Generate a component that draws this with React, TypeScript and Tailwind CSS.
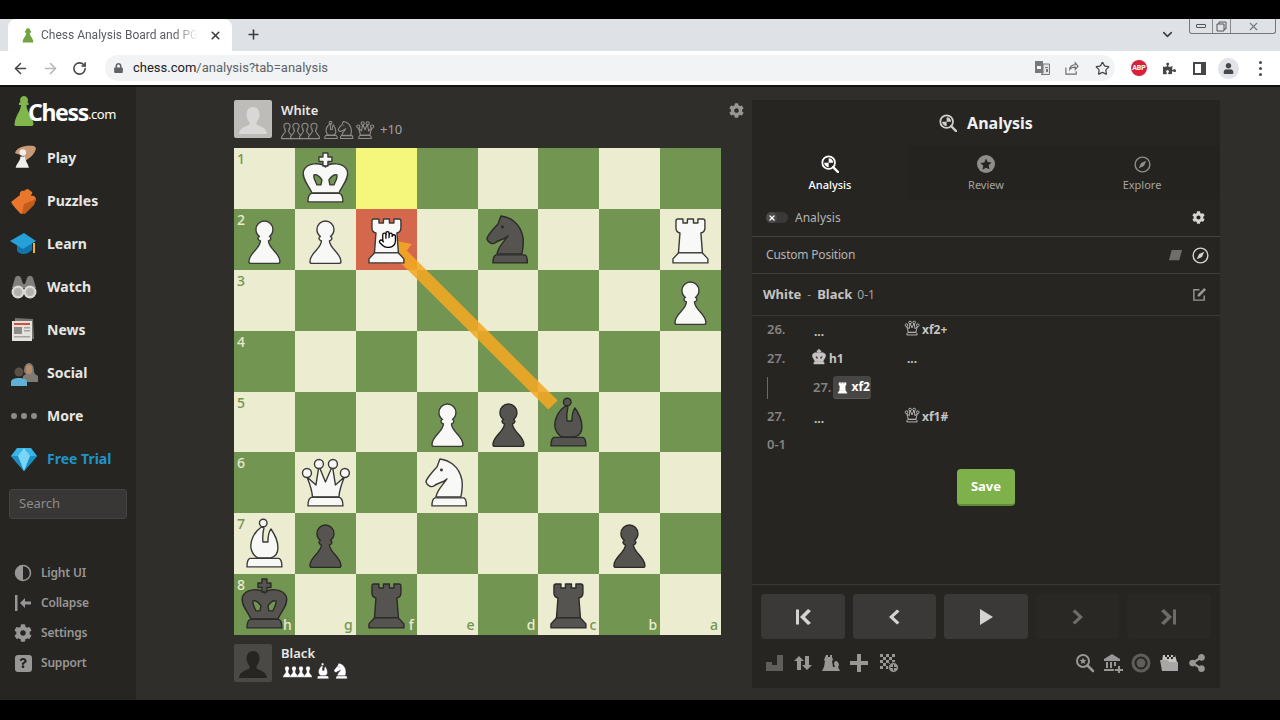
import { ArrowLeft, ArrowRight, ChevronDown, Hand, Plus, RotateCw, Star, X } from 'lucide-react';
import { FaCog, FaLock, FaPuzzlePiece, FaQuestion, FaShareAlt, FaUser } from 'react-icons/fa';

type PieceType = 'K' | 'Q' | 'R' | 'B' | 'N' | 'P';

const piecePaths: Record<PieceType, string[]> = {
  K: [
    'M28 5h5v4h4v4.500h-4V18h-5v-4.500h-4V9h4zM30.500 19C26 14.500 12 14 8.500 23c-2 8 5.500 15 8.500 22h27c3-7 10.500-14 8.500-22-3.500-9-17.500-8.500-22-4zM19 27c3-1 6 2 8 5l-1 5h-4c-1-3-4-7-3-10zM42 27c-3-1-6 2-8 5l1 5h4c1-3 4-7 3-10z',
    'M16.500 45.500h28q3.500 1 3.500 8.500H13q0-7.500 3.500-8.500z',
  ],
  Q: [
    'M17.500 45c-.5-7-3-14-5.500-20l9 8 3-19 6.500 16L37.500 14l3 19 9-8c-2.500 6-5 13-5.500 20z',
    'M16.500 45.500h28q3.500 1 3.500 8.500H13q0-7.500 3.500-8.500z',
    'M7.500 21a4.500 4.500 0 1 0 9 0a4.500 4.500 0 1 0-9 0zM19.500 12a4.500 4.500 0 1 0 9 0a4.500 4.500 0 1 0-9 0zM33.500 12a4.500 4.500 0 1 0 9 0a4.500 4.500 0 1 0-9 0zM45.500 21a4.500 4.500 0 1 0 9 0a4.500 4.500 0 1 0-9 0z',
  ],
  R: [
    'M16 12q0-2 2-2h5v4h4.500v-4h6v4H38v-4h5q2 0 2 2v7q0 4-4 5l1.500 20h-24L20 24q-4-1-4-5z',
    'M18.500 44h24l5.500 6v4H13v-4z',
  ],
  B: [
    'M27.500 14C20 19 16 28 17 35c1 6 5 9 7 10h13c3-1 7-4 7-10 0-8-3-13-7-19-2 3-3 8-3 13h-5c-.5-5 0-10 1-14z',
    'M25.500 10a3.800 3.800 0 1 0 7.600 0a3.800 3.800 0 1 0-7.600 0z',
    'M16 45.500h29q3 1 3 8.500H13q0-7.500 3-8.500z',
  ],
  N: [
    'M23 7c8 1 19 6 22 21 1 6 0 12-1 17H19c1-7 7-12 11-18-4 4-10 4-13 7-3 2-7-1-8-4 0-3 8-12 11-15z',
    'M18 46h29q2.500 1 2.500 8H15q0-7 3-8z',
  ],
  P: [
    'M22 20.500a8.500 8.500 0 1 1 17 0c0 3-1.500 5.500-3.500 7 1 .5 1.500 1 1.500 2s-1 2-2.500 2.500c.5 8 11.500 12 11.500 20.500q0 2-2 2H17q-2 0-2-2c0-8.500 11-12.500 11.500-20.500-1.500-.5-2.500-1.500-2.500-2.500s.5-1.500 1.500-2c-2-1.500-3.500-4-3.500-7z',
  ],
};

const Piece = ({ type, fill, stroke, width = 1.4 }: { type: PieceType; fill: string; stroke: string; width?: number }) => (
  <svg viewBox="0 0 61 61" className="w-full h-full block">
    {piecePaths[type].map((d, i) => (
      <path key={i} d={d} fill={fill} fillRule="evenodd" stroke={stroke} strokeWidth={width} strokeLinejoin="round" />
    ))}
    {type === 'N' && <circle cx="24.500" cy="18" r="1.500" fill={stroke} />}
  </svg>
);

const BoardPiece = ({ code }: { code: string }) => {
  const white = code[0] === 'w';
  return <Piece type={code[1] as PieceType} fill={white ? '#f8f8f6' : '#565450'} stroke={white ? '#3b3a38' : '#2b2a28'} />;
};

const board = [
  ['', 'wK', '', '', '', '', '', ''],
  ['wP', 'wP', 'wR', '', 'bN', '', '', 'wR'],
  ['', '', '', '', '', '', '', 'wP'],
  ['', '', '', '', '', '', '', ''],
  ['', '', '', 'wP', 'bP', 'bB', '', ''],
  ['', 'wQ', '', 'wN', '', '', '', ''],
  ['wB', 'bP', '', '', '', '', 'bP', ''],
  ['bK', '', 'bR', '', '', 'bR', '', ''],
];
const files = ['h', 'g', 'f', 'e', 'd', 'c', 'b', 'a'];

const squareColor = (r: number, c: number) => {
  if (r === 0 && c === 2) return 'bg-[#f5f67c]';
  if (r === 1 && c === 2) return 'bg-[#d4684c]';
  return (r + c) % 2 === 0 ? 'bg-[#ebecd0]' : 'bg-[#739552]';
};

const Board = () => (
  <div className="relative w-[487px] h-[487px]">
    <div className="grid grid-cols-8 grid-rows-8 w-full h-full">
      {board.map((row, r) =>
        row.map((_, c) => {
          const light = (r + c) % 2 === 0;
          return (
            <div key={`${r}-${c}`} className={`relative ${squareColor(r, c)}`}>
              {c === 0 && (
                <span className={`absolute left-[3px] top-[2px] text-[14px] font-medium leading-[18px] ${light ? 'text-[#739552]' : 'text-[#ebecd0]'}`}>{r + 1}</span>
              )}
              {r === 7 && (
                <span className={`absolute right-[3px] bottom-[1px] text-[14px] font-medium leading-[18px] ${light ? 'text-[#739552]' : 'text-[#ebecd0]'}`}>{files[c]}</span>
              )}
            </div>
          );
        }),
      )}
    </div>
    <svg viewBox="0 0 487 487" className="absolute inset-0 w-full h-full">
      <path d="M323.700 252.500 L314.300 261.500 L163.300 111.500 L156 116 L152 91 L178 96 L172.700 102.500 Z" fill="#f2a922" opacity="0.88" />
    </svg>
    <div className="absolute inset-0 grid grid-cols-8 grid-rows-8">
      {board.flat().map((code, i) => (
        <div key={i}>{code && <BoardPiece code={code} />}</div>
      ))}
    </div>
    <Hand className="absolute left-[144px] top-[82px] w-[19px] h-[19px] text-black" fill="white" strokeWidth={1.6} />
  </div>
);

const Avatar = ({ dark }: { dark?: boolean }) => (
  <div className={`w-[38px] h-[38px] shrink-0 rounded-[2px] overflow-hidden ${dark ? 'bg-[#4a4946]' : 'bg-[#bdbcb9]'}`}>
    <svg viewBox="0 0 38 38" className="w-full h-full">
      <path d="M19 7c4 0 6.500 3 6.500 7.500 0 3.500-1.500 6-3 7.500v2.500c3 2 10 2.500 10.500 9.500H5c.5-7 7.500-7.500 10.500-9.500V22c-1.500-1.500-3-4-3-7.500C12.500 10 15 7 19 7z" fill={dark ? '#262522' : '#d9d8d6'} />
    </svg>
  </div>
);

const Small = ({ type, fill, stroke, width = 3, className }: { type: PieceType; fill: string; stroke: string; width?: number; className: string }) => (
  <div className={`shrink-0 ${className}`}>
    <Piece type={type} fill={fill} stroke={stroke} width={width} />
  </div>
);

const PlayerRow = ({ name, dark }: { name: string; dark?: boolean }) => {
  const fill = dark ? '#ffffff' : '#33312e';
  const stroke = dark ? '#302e2b' : '#8f8e8b';
  return (
    <div className="flex items-start gap-[9px] h-[38px]">
      <Avatar dark={dark} />
      <div>
        <div className={`text-[13px] font-semibold text-[#e8e8e6] leading-[18px] ${dark ? '' : 'mt-px'}`}>{name}</div>
        {dark ? (
          <div className="flex items-center h-[18px]">
            <Small type="P" fill={fill} stroke={stroke} width={1} className="w-[16px] h-[16px] -ml-[2px]" />
            <Small type="P" fill={fill} stroke={stroke} width={1} className="w-[16px] h-[16px] -ml-[9px]" />
            <Small type="P" fill={fill} stroke={stroke} width={1} className="w-[16px] h-[16px] -ml-[9px]" />
            <Small type="P" fill={fill} stroke={stroke} width={1} className="w-[16px] h-[16px] -ml-[9px]" />
            <Small type="B" fill={fill} stroke={stroke} width={1} className="w-[20px] h-[20px] -ml-[3px]" />
            <Small type="N" fill={fill} stroke={stroke} width={1} className="w-[20px] h-[20px] -ml-[2px]" />
          </div>
        ) : (
          <div className="flex items-center h-[18px] mt-[2px]">
            <Small type="P" fill={fill} stroke={stroke} className="w-[22px] h-[22px] -ml-[5px]" />
            <Small type="P" fill={fill} stroke={stroke} className="w-[22px] h-[22px] -ml-[13px]" />
            <Small type="P" fill={fill} stroke={stroke} className="w-[22px] h-[22px] -ml-[13px]" />
            <Small type="P" fill={fill} stroke={stroke} className="w-[22px] h-[22px] -ml-[13px]" />
            <Small type="B" fill={fill} stroke={stroke} className="w-[22px] h-[22px] -ml-[5px]" />
            <Small type="N" fill={fill} stroke={stroke} className="w-[22px] h-[22px] -ml-[7px]" />
            <Small type="Q" fill={fill} stroke={stroke} className="w-[22px] h-[22px] -ml-[3px]" />
            <span className="ml-[4px] text-[13px] text-[#a3a2a0]">+10</span>
          </div>
        )}
      </div>
    </div>
  );
};

/* sidebar artwork */
const PlayIcon = () => (
  <svg viewBox="0 0 28 28" className="w-[28px] h-[28px]">
    <path d="M5 9c2-6 10-8 19-7l2 2c-1 6-6 10-11 13l-1-5c-3-2-6-1-9-3z" fill="#c99a76" />
    <path d="M11 8a3.500 3.500 0 1 1 7 0 3.500 3.500 0 0 1-7 0zM12 12h5c0 5 3 7 4 12H7c1-5 5-7 5-12z" fill="#efeeec" transform="translate(-1 1) scale(.95)" />
  </svg>
);
const PuzzleIcon = () => (
  <svg viewBox="0 0 28 28" className="w-[28px] h-[28px]">
    <path d="M1 15l9-7c-1-3 2-5 4-4 1-1 2-2 4-2l4 3c1 1-1 3-1 4 3-1 5 1 5 4l-2 3-9 10-4 1C7 23 3 19 1 15z" fill="#e8772c" />
    <path d="M12 26l2-9 12-5-2 6-9 9z" fill="#c25c1c" />
  </svg>
);
const LearnIcon = () => (
  <svg viewBox="0 0 28 28" className="w-[28px] h-[28px]">
    <path d="M7 13l0 8c3 4 10 4 15-1v-8z" fill="#0f76ac" />
    <path d="M0 11L14 3l12 8-13 8z" fill="#25a0d8" />
    <path d="M23 13h2v10h-2z" fill="#e8b63a" />
  </svg>
);
const WatchIcon = () => (
  <svg viewBox="0 0 28 28" className="w-[28px] h-[28px]">
    <path d="M5 5c1-3 5-3 6 0l2 6h2l2-6c1-3 5-3 6 0l3 10H2z" fill="#807f7c" />
    <circle cx="8" cy="19" r="6.500" fill="#d9d8d6" />
    <circle cx="20" cy="19" r="6.500" fill="#d9d8d6" />
    <circle cx="8" cy="19" r="4" fill="#b3b2af" />
    <circle cx="20" cy="19" r="4" fill="#b3b2af" />
  </svg>
);
const NewsIcon = () => (
  <svg viewBox="0 0 28 28" className="w-[28px] h-[28px]">
    <path d="M5 2l18 1 1 20H4z" fill="#77746f" />
    <rect x="2" y="5" width="20" height="20" fill="#e4e2de" />
    <rect x="4" y="7" width="16" height="2" fill="#d1503c" />
    <rect x="4" y="11" width="8" height="7" fill="#8b8a87" />
    <rect x="14" y="11" width="6" height="1.500" fill="#a5a4a1" />
    <rect x="14" y="14" width="6" height="1.500" fill="#a5a4a1" />
    <rect x="4" y="20" width="16" height="1.500" fill="#a5a4a1" />
  </svg>
);
const SocialIcon = () => (
  <svg viewBox="0 0 28 28" className="w-[28px] h-[28px]">
    <path d="M14 12c0-6 3-8 5-8s5 2 5 8c0 2 1 3 1 3l3 2v6H13v-6l3-2s-2-1-2-3z" fill="#7f7a74" />
    <path d="M16 8c1-3 5-3 6 0v5c-1 3-5 3-6 0z" fill="#b58a6a" />
    <circle cx="9" cy="13" r="4.500" fill="#5a5047" />
    <path d="M1 27v-4c0-3 4-4 8-4s8 1 8 4v4z" fill="#5fb1d6" />
  </svg>
);
const DotsIcon = () => (
  <svg viewBox="0 0 28 28" className="w-[28px] h-[28px]">
    <circle cx="4" cy="14" r="3" fill="#8d8c89" />
    <circle cx="14" cy="14" r="3" fill="#8d8c89" />
    <circle cx="24" cy="14" r="3" fill="#8d8c89" />
  </svg>
);
const DiamondIcon = () => (
  <svg viewBox="0 0 28 28" className="w-[28px] h-[28px]">
    <path d="M7 3h14l6 8-13 15L1 11z" fill="#38b6e8" />
    <path d="M1 11h26L14 26z" fill="#1b8fc6" />
    <path d="M8 11l6-8 6 8-6 15z" fill="#7bd6f6" />
  </svg>
);
const nav = [
  { label: 'Play', icon: <PlayIcon /> },
  { label: 'Puzzles', icon: <PuzzleIcon /> },
  { label: 'Learn', icon: <LearnIcon /> },
  { label: 'Watch', icon: <WatchIcon /> },
  { label: 'News', icon: <NewsIcon /> },
  { label: 'Social', icon: <SocialIcon /> },
  { label: 'More', icon: <DotsIcon /> },
  { label: 'Free Trial', icon: <DiamondIcon /> },
];

const HalfCircle = () => (
  <svg viewBox="0 0 18 18" className="w-[18px] h-[18px]">
    <circle cx="9" cy="9" r="7.500" fill="none" stroke="#989795" strokeWidth="1.500" />
    <path d="M9 1.500a7.500 7.500 0 0 0 0 15z" fill="#989795" />
  </svg>
);
const CollapseIcon = () => (
  <svg viewBox="0 0 18 18" className="w-[18px] h-[18px]">
    <path d="M1 1h2.500v16H1zM6 9l5-5v3.500h6v3h-6V14z" fill="#989795" />
  </svg>
);
const bottomNav = [
  { label: 'Light UI', icon: <HalfCircle /> },
  { label: 'Collapse', icon: <CollapseIcon /> },
  { label: 'Settings', icon: <FaCog className="w-[18px] h-[18px] text-[#989795]" /> },
  {
    label: 'Support',
    icon: (
      <div className="w-[17px] h-[17px] rounded-[3px] bg-[#989795] flex items-center justify-center">
        <FaQuestion className="w-[10px] h-[10px] text-[#262522]" />
      </div>
    ),
  },
];

const Sidebar = () => (
  <aside className="w-[136px] shrink-0 bg-[#262522] flex flex-col">
    <div className="flex items-center h-[30px] mt-[9px] pl-[14px]">
      <svg viewBox="0 0 20 30" className="w-[20px] h-[30px] shrink-0">
        <path d="M6.500 6a4 4 0 1 1 7 0l1 1v2h-2c0 7 6 10 7 19q0 2-2 2H2q-2 0-1.500-2c1-9 6-12 6.500-19H5V7z" fill="#81b64c" />
      </svg>
      <span className="-ml-[6px] text-[23px] font-bold text-white tracking-[-1.300px] leading-none mt-[2px]">Chess</span>
      <span className="text-[13px] text-white tracking-[-0.500px] mt-[7px]">.com</span>
    </div>
    <nav className="mt-[10px]">
      {nav.map(n => (
        <div key={n.label} className="flex items-center h-[43px] pl-[10px] gap-[9px]">
          {n.icon}
          <span className={`text-[14px] font-bold ${n.label === 'Free Trial' ? 'text-[#1f94c9]' : 'text-[#e6e6e4]'}`}>{n.label}</span>
        </div>
      ))}
    </nav>
    <div className="mt-[9px] mx-[9px] h-[30px] rounded-[3px] bg-[#383735] border border-[#454441] flex items-center pl-[9px] text-[13px] text-[#8d8c89]">Search</div>
    <div className="mt-[39px]">
      {bottomNav.map(n => (
        <div key={n.label} className="flex items-center h-[30px] pl-[14px] gap-[9px]">
          <div className="w-[18px] flex justify-center">{n.icon}</div>
          <span className="text-[12px] font-semibold tracking-[-0.200px] text-[#989795]">{n.label}</span>
        </div>
      ))}
    </div>
  </aside>
);

/* panel icons */
const AnalysisIcon = ({ color, size }: { color: string; size: string }) => (
  <svg viewBox="0 0 20 20" className={size}>
    <circle cx="8.500" cy="8.500" r="7" fill="none" stroke={color} strokeWidth="2" />
    <path d="M8.500 3.500a5 5 0 0 1 5 5h-5zM8.500 8.500v5a5 5 0 0 1-5-5z" fill={color} />
    <path d="M13.500 13.500L19 19" stroke={color} strokeWidth="2.500" strokeLinecap="round" />
  </svg>
);
const StarDisc = () => (
  <svg viewBox="0 0 18 18" className="w-[18px] h-[18px]">
    <circle cx="9" cy="9" r="9" fill="#8f8e8c" />
    <path d="M9 3.500l1.700 3.600 3.900.5-2.900 2.700.8 3.900L9 12.800l-3.500 1.900.8-3.900-2.900-2.700 3.900-.5z" fill="#262522" />
  </svg>
);
const Compass = ({ color }: { color: string }) => (
  <svg viewBox="0 0 18 18" className="w-[17px] h-[17px]">
    <circle cx="9" cy="9" r="7.800" fill="none" stroke={color} strokeWidth="1.500" />
    <path d="M13 5l-2.500 5.500L5 13l2.500-5.500z" fill={color} />
  </svg>
);

const QueenMark = () => (
  <div className="w-[18px] h-[18px] shrink-0 -mt-[3px]">
    <Piece type="Q" fill="#262522" stroke="#c5c4c2" width={3} />
  </div>
);

const MoveText = ({ children, className = 'text-[#c5c4c2]' }: { children: React.ReactNode; className?: string }) => (
  <span className={`text-[12px] font-bold ${className}`}>{children}</span>
);

const Num = ({ children }: { children: React.ReactNode }) => (
  <span className="w-[46px] text-[13px] font-semibold text-[#858482] shrink-0">{children}</span>
);

const Dots = ({ className = '' }: { className?: string }) => (
  <span className={`text-[12px] font-bold text-[#c5c4c2] ${className}`}>...</span>
);

const Moves = () => (
  <div className="-mt-px pl-[15px]">
    <div className="flex items-center h-[29px]">
      <Num>26.</Num>
      <div className="w-[90px] pl-px"><Dots /></div>
      <div className="flex items-center gap-px"><QueenMark /><MoveText>xf2+</MoveText></div>
    </div>
    <div className="flex items-center h-[29px]">
      <Num>27.</Num>
      <div className="w-[90px] flex items-center gap-px">
        <div className="w-[18px] h-[18px] -mt-[3px] -ml-[3px]"><Piece type="K" fill="#c5c4c2" stroke="#c5c4c2" width={2} /></div>
        <MoveText>h1</MoveText>
      </div>
      <Dots className="ml-[4px]" />
    </div>
    <div className="flex items-center h-[29px]">
      <div className="w-[46px] h-[22px] shrink-0"><div className="w-px h-full bg-[#6a6967]" /></div>
      <span className="text-[13px] font-semibold text-[#858482] mr-[2px]">27.</span>
      <div className="flex items-center h-[23px] w-[38px] bg-[#474644] rounded-[3px] pl-[2px] gap-px border-b border-[#5a5957]">
        <div className="w-[15px] h-[15px]"><Piece type="R" fill="#ffffff" stroke="#ffffff" width={1.5} /></div>
        <MoveText className="text-white">xf2</MoveText>
      </div>
    </div>
    <div className="flex items-center h-[29px]">
      <Num>27.</Num>
      <div className="w-[90px] pl-px"><Dots /></div>
      <div className="flex items-center gap-px"><QueenMark /><MoveText>xf1#</MoveText></div>
    </div>
    <div className="flex items-center h-[28px]"><Num>0-1</Num></div>
  </div>
);

const NavButton = ({ d, on }: { d: string; on?: boolean }) => (
  <div className={`flex-1 h-[45px] rounded-[4px] flex items-center justify-center ${on ? 'bg-[#3a3937]' : 'bg-[#292825]'}`}>
    <svg viewBox="0 0 18 18" className="w-[18px] h-[18px]">
      <path d={d} fill={on ? '#d5d4d2' : '#6d6c69'} />
    </svg>
  </div>
);

const ToolIcon = ({ children, w = 'w-[20px]' }: { children: React.ReactNode; w?: string }) => (
  <svg viewBox="0 0 20 20" className={`${w} h-[20px]`}>{children}</svg>
);

const Footer = () => (
  <div className="border-t border-[#3a3937] px-[9px] pt-[9px]">
    <div className="flex gap-[8px]">
      <NavButton on d="M2 1.500h3v15H2zM14 1l3 2-6 6 6 6-3 2-8-8z" />
      <NavButton on d="M12 1.500l2.500 2L8.500 9l6 5.500-2.500 2L4 9z" />
      <NavButton on d="M3 1l13 8-13 8z" />
      <NavButton d="M6 1.500l-2.500 2L9.500 9l-6 5.500 2.500 2L14 9z" />
      <NavButton d="M13 1.500h3v15h-3zM4 1L1 3l6 6-6 6 3 2 8-8z" />
    </div>
    <div className="flex items-center justify-between h-[20px] mt-[14px] pl-[4px] pr-[5px]">
      <div className="flex items-center gap-[8px]">
        <ToolIcon><path d="M1 9h6v9H1zM7 12h5v6H7zM12 2h6v16h-6z" fill="#5f5e5b" /></ToolIcon>
        <ToolIcon><path d="M6 3l5 5H8v9H4V8H1zM14 17l-5-5h3V3h4v9h3z" fill="#989795" /></ToolIcon>
        <ToolIcon><path d="M5 2h2v2h2V2h2v2l1 3-1 1 1 6h2l-1-3c0-2 1-3 2-3s3 2 3 4l-1 2 2 4H1l2-4 1-6-1-1z" fill="#989795" /></ToolIcon>
        <ToolIcon><path d="M8 1h4v7h7v4h-7v7H8v-7H1V8h7z" fill="#989795" /></ToolIcon>
        <ToolIcon w="w-[24px]">
          <path d="M1 1h15v15H1z" fill="#989795" />
          <path d="M4 1h3v3H4zM10 1h3v3h-3zM1 4h3v3H1zM7 4h3v3H7zM13 4h3v3h-3zM4 7h3v3H4zM10 7h3v3h-3zM1 10h3v3H1zM7 10h3v3H7zM4 13h3v3H4z" fill="#262522" />
          <circle cx="14.500" cy="14.500" r="5" fill="#989795" stroke="#262522" />
          <path d="M14 11.500h1v2.500h2.500v1H15v2.500h-1V15h-2.500v-1H14z" fill="#262522" />
        </ToolIcon>
      </div>
      <div className="flex items-center gap-[8px]">
        <ToolIcon>
          <circle cx="8" cy="8" r="6" fill="none" stroke="#989795" strokeWidth="2" />
          <path d="M8 4.500l1 2.300 2.500.2-1.900 1.600.6 2.500L8 9.800l-2.200 1.300.6-2.500L4.500 7 7 6.800z" fill="#989795" />
          <path d="M12.500 12.500L18 18" stroke="#989795" strokeWidth="2.500" strokeLinecap="round" />
        </ToolIcon>
        <ToolIcon>
          <path d="M9 1l8 5v2H1V6zM3 9h2v6H3zM7 9h2v6H7zM11 9h2v4h-2zM1 16h10v2H1z" fill="#989795" />
          <path d="M15 13h2v3h3v2h-3v2h-2v-2h-3v-2h3z" fill="#989795" />
        </ToolIcon>
        <ToolIcon>
          <circle cx="10" cy="10" r="8" fill="none" stroke="#5f5e5b" strokeWidth="3" />
          <circle cx="10" cy="10" r="4.500" fill="#5f5e5b" />
        </ToolIcon>
        <ToolIcon>
          <path d="M4 2h12l2 7H3z" fill="#c5c4c2" />
          <path d="M6 2h2v2H6zM10 2h2v2h-2zM14 2h2v2h-2zM8 4h2v2H8zM12 4h2v2h-2z" fill="#262522" />
          <path d="M1 7h7l2 2h9v9H3z" fill="#a8a7a5" />
        </ToolIcon>
        <FaShareAlt className="ml-px w-[18px] h-[18px] text-[#989795]" />
      </div>
    </div>
  </div>
);

const TabItem = ({ label, active, icon }: { label: string; active?: boolean; icon: React.ReactNode }) => (
  <div className={`flex-1 flex flex-col items-center justify-start pt-[9px] ${active ? '' : 'bg-[#242320]'}`}>
    <div className="h-[18px] flex items-center">{icon}</div>
    <span className={`text-[11px] leading-[14px] mt-[5px] ${active ? 'text-white font-medium' : 'text-[#a5a4a2]'}`}>{label}</span>
  </div>
);

const Panel = () => (
  <section className="w-[468px] h-[588px] bg-[#262522] flex flex-col text-[#c5c4c2]">
    <div className="h-[46px] flex items-center justify-center gap-[10px]">
      <AnalysisIcon color="#d0cfcd" size="w-[18px] h-[18px]" />
      <span className="text-[16px] font-bold text-[#f0f0ee]">Analysis</span>
    </div>
    <div className="h-[53px] flex">
      <TabItem label="Analysis" active icon={<AnalysisIcon color="#ffffff" size="w-[18px] h-[18px]" />} />
      <TabItem label="Review" icon={<StarDisc />} />
      <TabItem label="Explore" icon={<Compass color="#8f8e8c" />} />
    </div>
    <div className="h-[38px] flex items-center pl-[14px] pr-[15px] border-b border-[#454442]">
      <div className="w-[22px] h-[11px] rounded-full bg-[#3a3937] flex items-center">
        <div className="w-[11px] h-[11px] rounded-full bg-[#4c4b49] flex items-center justify-center">
          <X className="w-[8px] h-[8px] text-white" strokeWidth={4} />
        </div>
      </div>
      <span className="ml-[7px] text-[12px] text-[#b5b4b2]">Analysis</span>
      <FaCog className="ml-auto w-[13px] h-[13px] text-[#d5d4d2]" />
    </div>
    <div className="h-[37px] flex items-center pl-[14px] pr-[11px] border-b border-[#3f3e3c]">
      <span className="text-[12px] tracking-[-0.200px] text-[#b5b4b2]">Custom Position</span>
      <svg viewBox="0 0 16 16" className="ml-auto w-[15px] h-[15px]">
        <path d="M4 2h11l-3 11H1z" fill="#6f6e6b" />
      </svg>
      <div className="ml-[9px]"><Compass color="#d5d4d2" /></div>
    </div>
    <div className="h-[42px] flex items-center pl-[11px] pr-[13px] border-b border-[#3a3937]">
      <span className="text-[13px] font-bold text-[#c5c4c2]">White</span>
      <span className="mx-[6px] text-[12px] text-[#8f8e8c]">-</span>
      <span className="text-[13px] font-bold text-[#c5c4c2]">Black</span>
      <span className="ml-[5px] text-[12px] text-[#a5a4a2]">0-1</span>
      <svg viewBox="0 0 16 16" className="ml-auto w-[15px] h-[15px]">
        <path d="M13 9v5H2V3h6" fill="none" stroke="#989795" strokeWidth="1.500" />
        <path d="M6 8l7-7 2 2-7 7H6z" fill="#989795" />
      </svg>
    </div>
    <Moves />
    <div className="flex justify-center mt-[10px]">
      <div className="w-[58px] h-[37px] rounded-[4px] bg-[#7fb14b] border-b-2 border-[#5f8c35] flex items-center justify-center text-[13px] font-bold text-white">Save</div>
    </div>
    <div className="mt-auto pb-[15px]">
      <Footer />
    </div>
  </section>
);

const ChromeBar = () => (
  <>
    <div className="h-[32px] shrink-0 bg-[#dee1e6] flex text-[#45474a] font-['Roboto',sans-serif]">
      <div className="ml-[8px] w-[224px] h-full bg-white rounded-t-[8px] flex items-center pl-[13px] pr-[10px]">
        <svg viewBox="0 0 14 18" className="w-[14px] h-[16px] shrink-0">
          <path d="M4.500 4a2.500 2.500 0 1 1 5 0l1 1v1.500H9c0 4 3 5 4 10q0 1-1 1H2q-1 0-1-1c1-5 4-6 4-10H3.500V5z" fill="#71a341" />
        </svg>
        <span className="ml-[6px] text-[12px] text-[#5a5c5f] whitespace-nowrap [mask-image:linear-gradient(90deg,black_85%,transparent)]">Chess Analysis Board and PG</span>
        <X className="ml-auto w-[13px] h-[13px] text-[#3c3c3c]" strokeWidth={3} />
      </div>
      <Plus className="ml-[14px] mt-[8px] w-[15px] h-[15px] text-[#3c3c3c]" strokeWidth={2.500} />
      <ChevronDown className="ml-auto mt-[8px] w-[15px] h-[15px] text-[#3c3c3c]" strokeWidth={2.500} />
      <div className="ml-[14px] mr-[4px] w-[87px] h-[15px] border border-t-0 border-[#777] rounded-b-[3px] flex items-center">
        <div className="w-[23px] flex justify-center border-r border-[#888] h-full items-center">
          <div className="w-[10px] h-[4px] border border-[#555] rounded-[1px]" />
        </div>
        <div className="w-[18px] flex justify-center border-r border-[#888] h-full items-center">
          <svg viewBox="0 0 11 11" className="w-[11px] h-[11px]">
            <path d="M3 3V1h7v7H8M1 3h7v7H1z" fill="none" stroke="#555" />
          </svg>
        </div>
        <X className="mx-auto w-[13px] h-[13px] text-[#777]" strokeWidth={2} />
      </div>
    </div>
    <div className="h-[34px] shrink-0 bg-white flex items-center pl-[12px] pr-[11px] font-['Roboto',sans-serif]">
      <ArrowLeft className="w-[17px] h-[17px] text-[#45474a]" strokeWidth={2.200} />
      <ArrowRight className="ml-[13px] w-[17px] h-[17px] text-[#b4b6b8]" strokeWidth={2.200} />
      <RotateCw className="ml-[13px] w-[15px] h-[15px] text-[#45474a]" strokeWidth={2.500} />
      <div className="ml-[18px] h-[26px] w-[1010px] rounded-full bg-[#f1f3f4] flex items-center pl-[9px] pr-[5px]">
        <FaLock className="w-[9px] h-[10px] text-[#5f6368]" />
        <span className="ml-[10px] text-[13px] text-[#202124]">chess.com<span className="text-[#5f6368]">/analysis?tab=analysis</span></span>
        <svg viewBox="0 0 15 14" className="ml-auto w-[15px] h-[14px]">
          <path d="M0 0h8v12H0z" fill="#77797c" />
          <path d="M8 3h6.500v10.500H6L8 12z" fill="#e4e5e6" stroke="#77797c" />
          <path d="M2 5h4v3H2z" fill="#f1f3f4" />
          <path d="M10 6h3v1h-3zM11 8h2v3h-2z" fill="#77797c" />
        </svg>
        <svg viewBox="0 0 16 16" className="ml-[14px] w-[15px] h-[15px]">
          <path d="M2 7v7h11v-3M6 9c0-3 3-5 6-5V2l3 3.500L12 9V6.500c-3 0-5 1-6 2.500z" fill="none" stroke="#6a6c6f" strokeWidth="1.200" />
        </svg>
        <Star className="ml-[16px] w-[15px] h-[15px] text-[#45474a]" strokeWidth={2} />
      </div>
      <div className="ml-[16px] w-[16px] h-[16px] rounded-full bg-[#d8203a] flex items-center justify-center text-[7px] font-bold text-white leading-none">ABP</div>
      <FaPuzzlePiece className="ml-[16px] w-[13px] h-[13px] text-[#45474a]" />
      <div className="ml-[17px] w-[13px] h-[13px] border-2 border-[#45474a] border-r-[5px]" />
      <div className="ml-[12px] w-[21px] h-[21px] rounded-full bg-[#e1e3e8] flex items-center justify-center">
        <FaUser className="w-[11px] h-[11px] text-[#45474a]" />
      </div>
      <div className="ml-[20px] flex flex-col gap-[3px]">
        <span className="w-[3px] h-[3px] rounded-full bg-[#45474a]" />
        <span className="w-[3px] h-[3px] rounded-full bg-[#45474a]" />
        <span className="w-[3px] h-[3px] rounded-full bg-[#45474a]" />
      </div>
    </div>
  </>
);

export default function App() {
  return (
    <div className="w-[1280px] h-[720px] bg-black overflow-hidden flex flex-col font-['Noto_Sans','Open_Sans',sans-serif]">
      <div className="h-[19px] shrink-0" />
      <ChromeBar />
      <main className="h-[615px] shrink-0 flex bg-[#302e2b] border-t-2 border-[#111]">
        <Sidebar />
        <div className="ml-[98px] pt-[13px] w-[487px]">
          <PlayerRow name="White" />
          <div className="mt-[10px]"><Board /></div>
          <div className="mt-[9px]"><PlayerRow name="Black" dark /></div>
        </div>
        <div className="w-[31px] pt-[16px] flex justify-center">
          <FaCog className="w-[15px] h-[15px] text-[#989795]" />
        </div>
        <div className="pt-[13px]"><Panel /></div>
      </main>
    </div>
  );
}
